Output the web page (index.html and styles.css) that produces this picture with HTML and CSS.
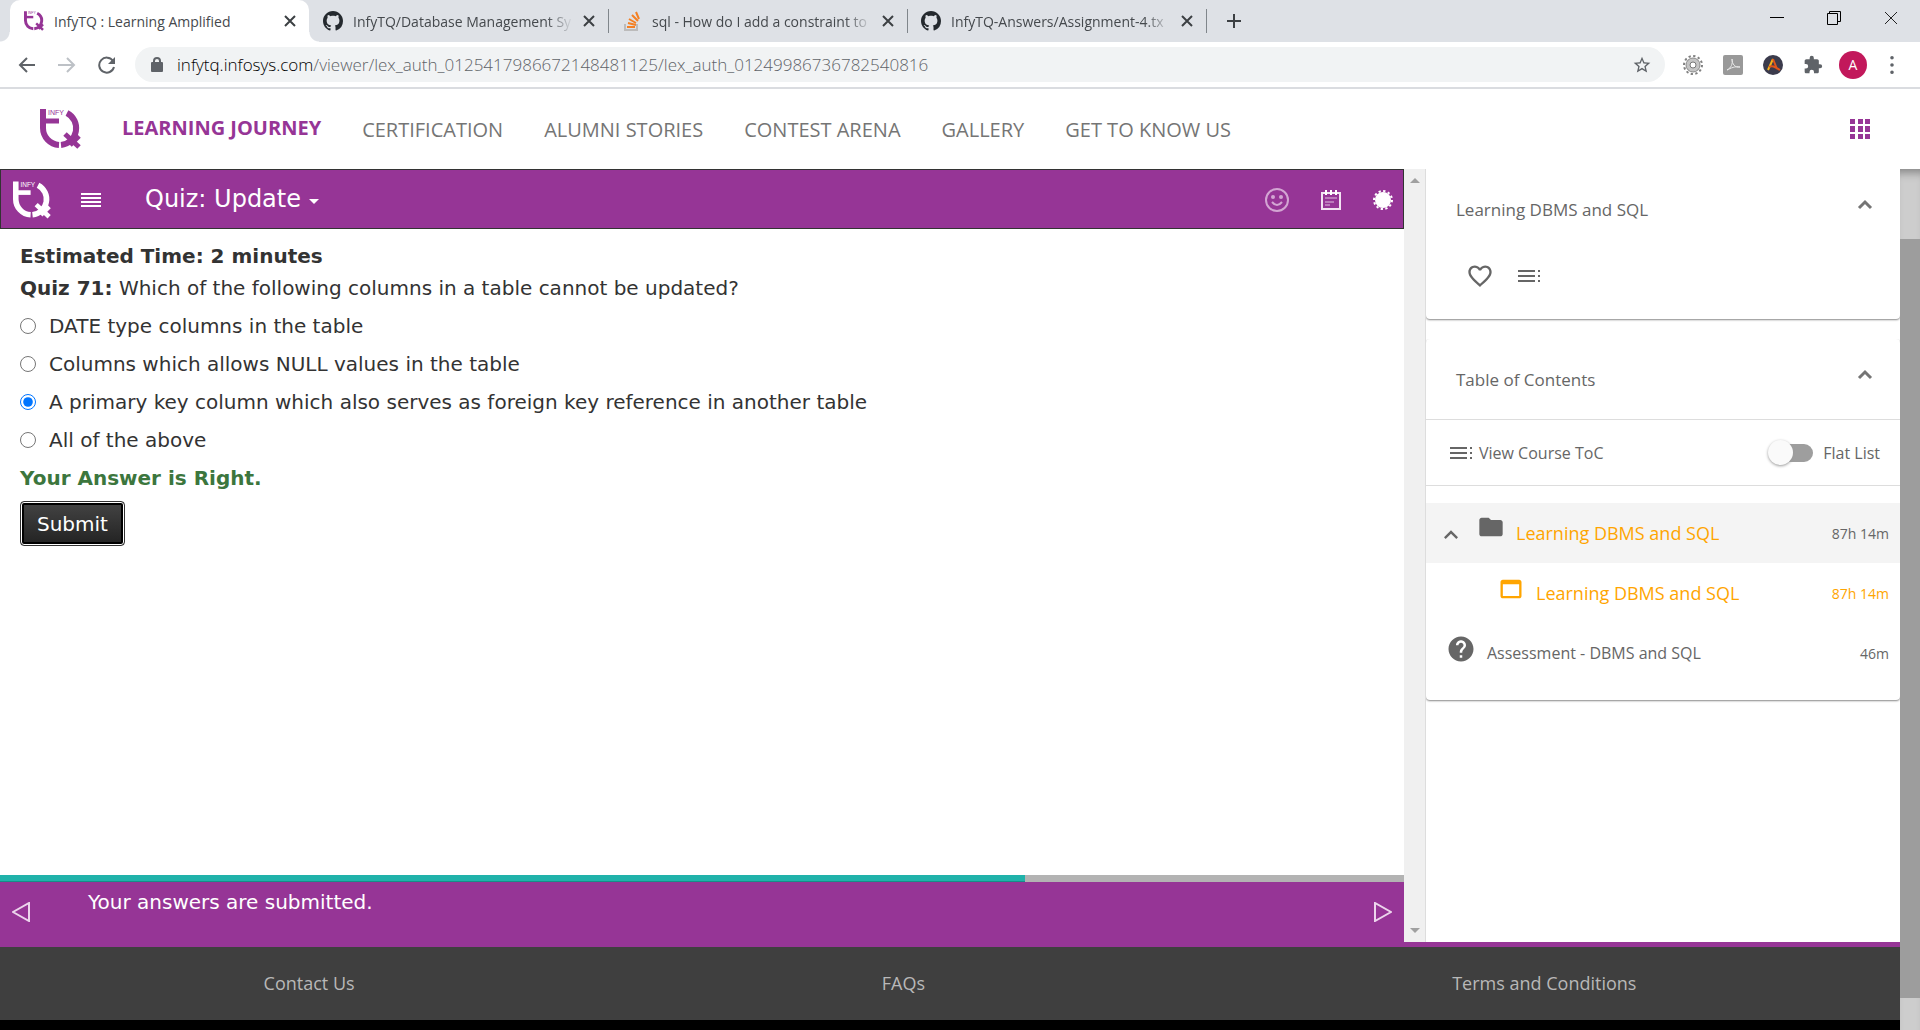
FILE: index.html
```html
<!DOCTYPE html>
<html lang="en">
<head>
<meta charset="utf-8">
<title>InfyTQ : Learning Amplified</title>
<link rel="stylesheet" href="styles.css">
</head>
<body>
<svg class="defs" aria-hidden="true">
  <symbol id="logo" viewBox="0 0 41 40">
    <g fill="none" stroke="currentColor">
      <path stroke-width="6" d="M3 0V19A17 17 0 0 0 19 36"/><path stroke-width="5" d="M0 12H19"/>
      <path stroke-width="6" d="M27 4A17 17 0 0 1 21 36"/><path d="M25 25L39 38" stroke-width="5"/><path d="M39 27L30 36" stroke-width="5"/>
    </g>
    <text x="8" y="6" font-family="Liberation Sans" font-size="7" fill="currentColor">INFY</text>
  </symbol>
  <symbol id="github" viewBox="0 0 16 16"><path fill="#24292e" d="M8 0C3.58 0 0 3.58 0 8c0 3.54 2.29 6.53 5.47 7.59.4.07.55-.17.55-.38v-1.49c-2.01.37-2.53-.49-2.69-.94-.09-.23-.48-.94-.82-1.13-.28-.15-.68-.52-.01-.53.63-.01 1.08.58 1.23.82.72 1.21 1.87.87 2.33.66.07-.52.28-.87.51-1.07-1.78-.2-3.64-.89-3.64-3.95 0-.87.31-1.59.82-2.15-.08-.2-.36-1.02.08-2.12 0 0 .67-.21 2.2.82.64-.18 1.32-.27 2-.27s1.36.09 2 .27c1.53-1.04 2.2-.82 2.2-.82.44 1.1.16 1.92.08 2.12.51.56.82 1.27.82 2.15 0 3.07-1.87 3.75-3.65 3.95.29.25.54.73.54 1.48v2.2c0 .21.15.46.55.38A8.01 8.01 0 0 0 16 8c0-4.42-3.58-8-8-8z"/></symbol>
  <symbol id="close" viewBox="0 0 12 12"><path d="M1 1L11 11M11 1L1 11" stroke="#3c4043" stroke-width="2"/></symbol>
  <symbol id="up" viewBox="0 0 24 24"><path d="M12 8l-6 6 1.41 1.41L12 10.83l4.59 4.58L18 14z" fill="currentColor"/></symbol>
  <symbol id="up-bold" viewBox="0 0 24 24"><path d="M6 15l6-6 6 6" fill="none" stroke="#757575" stroke-width="3"/></symbol>
  <symbol id="toc" viewBox="0 0 30 30"><path d="M4 9h17v2H4zM4 14h17v2H4zM4 19h17v2H4zM24 9h2v2h-2zM24 14h2v2h-2zM24 19h2v2h-2z" fill="currentColor"/></symbol>
</svg>
<header class="browser">
  <div class="tabs">
    <div class="tab active"><svg class="fav purple"><use href="#logo"/></svg><span class="title">InfyTQ : Learning Amplified</span><button aria-label="Close tab"><svg class="x"><use href="#close"/></svg></button></div>
    <div class="tab"><svg class="fav"><use href="#github"/></svg><span class="title">InfyTQ/Database Management Sy</span><button aria-label="Close tab"><svg class="x"><use href="#close"/></svg></button></div>
    <div class="tab"><svg class="fav" viewBox="0 0 20 20"><path d="M3 13v6h12v-6" fill="none" stroke="#bcbbbb" stroke-width="2"/><path d="M5 16h8M6 12l8 2M7 8l7 4M10 4l6 6M14 1l3 7" stroke="#f48024" stroke-width="2"/></svg><span class="title">sql - How do I add a constraint to</span><button aria-label="Close tab"><svg class="x"><use href="#close"/></svg></button></div>
    <div class="tab"><svg class="fav"><use href="#github"/></svg><span class="title">InfyTQ-Answers/Assignment-4.tx</span><button aria-label="Close tab"><svg class="x"><use href="#close"/></svg></button></div>
    <button class="newtab" aria-label="New tab"><svg width="16" height="16"><path d="M8 1v14M1 8h14" stroke="#3c4043" stroke-width="2"/></svg></button>
    <div class="window">
      <button aria-label="Minimize"><svg width="14" height="14"><path d="M0 6.500H14" stroke="#000"/></svg></button>
      <button aria-label="Restore"><svg width="14" height="14"><path d="M.5 2.500h10v11h-10zM2.500 2.500v-2h11v10h-3" fill="none" stroke="#000"/></svg></button>
      <button aria-label="Close"><svg width="14" height="14"><path d="M1 1L13 13M13 1L1 13" stroke="#222"/></svg></button>
    </div>
  </div>
  <div class="toolbar">
    <button aria-label="Back"><svg width="18" height="18"><path d="M17 9H2M9 2L2 9l7 7" fill="none" stroke="#5f6368" stroke-width="2"/></svg></button>
    <button aria-label="Forward"><svg width="18" height="18"><path d="M0 9h16M9 2l7 7-7 7" fill="none" stroke="#bdc1c6" stroke-width="2"/></svg></button>
    <button aria-label="Reload"><svg width="18" height="18"><path d="M15 5A7.500 7.500 0 1 0 16 11" fill="none" stroke="#5f6368" stroke-width="2"/><path d="M17 1v7h-7z" fill="#5f6368"/></svg></button>
    <div class="address">
      <svg width="12" height="16"><rect y="5" width="12" height="10" rx="1" fill="#5f6368"/><path d="M3 6V4a3 3 0 0 1 6 0v2" fill="none" stroke="#5f6368" stroke-width="2"/></svg>
      <span class="url"><b>infytq.infosys.com</b>/viewer/lex_auth_0125417986672148481125/lex_auth_01249986736782540816</span>
      <button aria-label="Bookmark"><svg width="20" height="20" viewBox="0 0 24 24"><path fill="#5f6368" d="M22 9.240l-7.190-.62L12 2 9.190 8.630 2 9.240l5.460 4.730L5.820 21 12 17.270 18.180 21l-1.630-7.030L22 9.240zM12 15.400l-3.760 2.270 1-4.280-3.320-2.880 4.380-.38L12 6.100l1.710 4.040 4.380.38-3.320 2.880 1 4.280L12 15.400z"/></svg></button>
    </div>
    <div class="exts">
      <svg viewBox="0 0 20 20"><circle cx="10" cy="10" r="9" fill="none" stroke="#808080" stroke-width="2" stroke-dasharray="2.300 2.400"/><circle cx="10" cy="10" r="7" fill="#c4c4c4" stroke="#8a8a8a"/><circle cx="10" cy="10" r="3" fill="#fff" stroke="#777"/></svg>
      <svg viewBox="0 0 20 20"><rect width="20" height="20" rx="2" fill="#999"/><path d="M4 15C8 13 10 9 9 4C9 9 12 13 17 12C12 11 8 13 4 15z" fill="none" stroke="#e8e8e8"/></svg>
      <svg viewBox="0 0 20 20"><circle cx="10" cy="10" r="10" fill="#3b3b4c"/><path d="M5 15L10 4" fill="none" stroke="#f5b31b" stroke-width="2"/><path d="M10 4L14 14M6 12C9 10 12 12 17 15" fill="none" stroke="#e0561b" stroke-width="2"/></svg>
      <svg viewBox="0 0 24 24"><path fill="#5f6368" d="M20.500 11H19V7c0-1.100-.9-2-2-2h-4V3.500a2.500 2.500 0 0 0-5 0V5H4c-1.100 0-2 .9-2 2v3.800h1.500a2.700 2.700 0 0 1 0 5.400H2V20c0 1.100.9 2 2 2h3.800v-1.500a2.700 2.700 0 0 1 5.400 0V22H17c1.100 0 2-.9 2-2v-4h1.500a2.500 2.500 0 0 0 0-5z"/></svg>
      <span class="avatar">A</span>
      <svg class="dots" viewBox="0 0 4 20"><path d="M2 2v.01M2 10v.01M2 18v.01" stroke="#5f6368" stroke-width="4" stroke-linecap="round"/></svg>
    </div>
  </div>
</header>
<nav class="site">
  <svg class="logo purple"><use href="#logo"/></svg>
  <a class="current" href="#">LEARNING JOURNEY</a><a href="#">CERTIFICATION</a><a href="#">ALUMNI STORIES</a><a href="#">CONTEST ARENA</a><a href="#">GALLERY</a><a href="#">GET TO KNOW US</a>
  <button class="apps" aria-label="Apps"><svg width="20" height="20"><path d="M0 0h5v5H0zM8 0h5v5H8zM15 0h5v5h-5zM0 7h5v6H0zM8 7h5v6H8zM15 7h5v6h-5zM0 15h5v5H0zM8 15h5v5H8zM15 15h5v5h-5z" fill="#963596"/></svg></button>
</nav>
<div class="view">
  <div class="page">
    <div class="content">
      <main class="quiz">
        <div class="bar">
          <svg class="logo small"><use href="#logo"/></svg>
          <button aria-label="Menu"><svg width="20" height="14"><path d="M0 1h20M0 5h20M0 9h20M0 13h20" stroke="#fff" stroke-width="2"/></svg></button>
          <h1>Quiz: Update</h1><span class="caret"></span>
          <div class="tools">
            <button aria-label="Feedback"><svg width="24" height="24" viewBox="0 0 24 24"><g fill="none" stroke="#d3a5d3" stroke-width="2"><circle cx="12" cy="12" r="11"/><path d="M7 14q5 6 10 0"/></g><circle cx="8" cy="9" r="2" fill="#d3a5d3"/><circle cx="16" cy="9" r="2" fill="#d3a5d3"/></svg></button>
            <button aria-label="Notes"><svg width="20" height="20"><path d="M1 3h18v16H1z" fill="none" stroke="#f2e3f2" stroke-width="2"/><path d="M4 8h12M4 12h9M4 15h5" fill="none" stroke="#e0c2e0"/><path d="M5 0v5M10 0v5M15 0v5" stroke="#fff" stroke-width="2"/></svg></button>
            <button aria-label="Settings"><svg width="20" height="20"><circle cx="10" cy="10" r="8" fill="#fff"/><circle cx="10" cy="10" r="9" fill="none" stroke="#fff" stroke-width="2" stroke-dasharray="2.300 2.400"/></svg></button>
          </div>
        </div>
        <form class="question">
          <p><b>Estimated Time: 2 minutes</b></p>
          <p><b>Quiz 71:</b> Which of the following columns in a table cannot be updated?</p>
          <label><input type="radio" name="q">DATE type columns in the table</label>
          <label><input type="radio" name="q">Columns which allows NULL values in the table</label>
          <label><input type="radio" name="q" checked>A primary key column which also serves as foreign key reference in another table</label>
          <label><input type="radio" name="q">All of the above</label>
          <p class="right"><b>Your Answer is Right.</b></p>
          <button type="button">Submit</button>
        </form>
        <div class="progress"><div style="width:73%"></div></div>
        <div class="status">
          <button aria-label="Previous"><svg width="18" height="20"><path d="M17 1v18L1 10z" fill="none" stroke="#ecd5ec" stroke-width="2"/></svg></button>
          <p>Your answers are submitted.</p>
          <button aria-label="Next"><svg width="18" height="20"><path d="M1 1v18l16-9z" fill="none" stroke="#ecd5ec" stroke-width="2"/></svg></button>
        </div>
      </main>
      <div class="track"><i class="arrow-up"></i><i class="arrow-down"></i></div>
      <aside>
        <section class="card first">
          <h2>Learning DBMS and SQL<svg class="i24"><use href="#up-bold"/></svg></h2>
          <div class="actions"><button aria-label="Like"><svg width="28" height="28" viewBox="0 0 24 24"><path fill="currentColor" d="M16.500 3c-1.740 0-3.410.81-4.500 2.090C10.910 3.810 9.240 3 7.500 3 4.420 3 2 5.420 2 8.500c0 3.780 3.400 6.860 8.550 11.540L12 21.350l1.450-1.320C18.600 15.360 22 12.280 22 8.500 22 5.420 19.580 3 16.500 3zm-4.400 15.550l-.1.100-.1-.1C7.140 14.240 4 11.390 4 8.500 4 6.500 5.500 5 7.500 5c1.540 0 3.040.99 3.570 2.360h1.870C13.460 5.990 14.960 5 16.500 5c2 0 3.500 1.500 3.500 3.500 0 2.890-3.140 5.740-7.900 10.050z"/></svg></button><button aria-label="Contents"><svg width="30" height="30"><use href="#toc"/></svg></button></div>
        </section>
        <section class="card">
          <h2>Table of Contents<svg class="i24"><use href="#up-bold"/></svg></h2>
          <div class="options"><a href="#"><svg width="30" height="30"><use href="#toc"/></svg>View Course ToC</a><label><input type="checkbox" class="switch">Flat List</label></div>
          <ul>
            <li class="folder"><svg class="chev"><use href="#up"/></svg><svg width="28" height="28" viewBox="0 0 24 24" class="raised"><path fill="currentColor" d="M10 4H4c-1.100 0-2 .9-2 2v12c0 1.100.9 2 2 2h16c1.100 0 2-.9 2-2V8c0-1.100-.9-2-2-2h-8l-2-2z"/></svg><a href="#">Learning DBMS and SQL</a><span>87h 14m</span></li>
            <li class="child"><svg width="28" height="28" viewBox="0 0 24 24" class="raised"><path fill="currentColor" d="M19 4H5c-1.100 0-2 .9-2 2v12c0 1.100.9 2 2 2h14c1.100 0 2-.9 2-2V6c0-1.100-.9-2-2-2zm0 14H5V8h14v10z"/></svg><a href="#">Learning DBMS and SQL</a><span>87h 14m</span></li>
            <li class="quizrow"><svg width="30" height="30" viewBox="0 0 24 24" class="raised"><path fill="currentColor" d="M12 2C6.480 2 2 6.480 2 12s4.480 10 10 10 10-4.480 10-10S17.520 2 12 2zm1 17h-2v-2h2v2zm2.070-7.750l-.9.920C13.450 12.900 13 13.500 13 15h-2v-.5c0-1.100.45-2.100 1.170-2.830l1.240-1.260c.37-.36.59-.86.59-1.410 0-1.100-.9-2-2-2s-2 .9-2 2H8c0-2.210 1.790-4 4-4s4 1.790 4 4c0 .88-.36 1.680-.93 2.250z"/></svg><a href="#">Assessment - DBMS and SQL</a><span>46m</span></li>
          </ul>
        </section>
      </aside>
    </div>
    <footer><a href="#">Contact Us</a><a href="#">FAQs</a><a href="#">Terms and Conditions</a></footer>
  </div>
  <div class="scroll"><div class="thumb"></div></div>
</div>
</body>
</html>
```
FILE: styles.css
```css
* { box-sizing: border-box; }
body { margin: 0; min-height: 100vh; display: flex; flex-direction: column; font-family: "Open Sans", sans-serif; color: #666; background: #fff; }
button { border: 0; background: none; padding: 0; font: inherit; color: inherit; display: flex; align-items: center; justify-content: center; }
a { color: inherit; text-decoration: none; }
h1, h2, p, ul { margin: 0; padding: 0; font-weight: 400; }
svg { display: block; flex: none; }
.defs { display: none; }
.purple { color: #963596; }

.browser { border-bottom: 2px solid #dadce0; background: #fff; }
.tabs { display: flex; height: 42px; background: #dee1e6; padding-left: 10px; align-items: stretch; }
.tab { display: flex; align-items: center; width: 299px; padding: 0 13px 0 14px; gap: 10px; position: relative; color: #45494d; }
.tab.active { background: #fff; border-radius: 10px 10px 0 0; }
.active::before, .active::after { content: ""; position: absolute; bottom: 0; width: 10px; height: 10px; }
.active::before { left: -10px; background: radial-gradient(circle at 0 0, transparent 9px, #fff 10px); }
.active::after { right: -10px; background: radial-gradient(circle at 100% 0, transparent 9px, #fff 10px); }
.tab + .tab + .tab::before, .newtab::before { content: ""; width: 1px; height: 24px; background: #80868b; position: absolute; left: 0; top: 9px; }
.fav { width: 20px; height: 20px; }
.title { flex: 1; font-size: 14px; white-space: nowrap; overflow: hidden; mask-image: linear-gradient(90deg, #000 88%, transparent); }
.active .title { mask-image: none; }
.x { width: 12px; height: 12px; }
.newtab { width: 56px; position: relative; }
.window { margin-left: auto; display: flex; gap: 43px; padding: 0 22px 6px 0; }

.toolbar { display: flex; align-items: center; height: 45px; padding: 0 26px 0 18px; gap: 22px; }
.address { flex: 1; display: flex; align-items: center; height: 35px; border-radius: 18px; background: #f1f3f4; padding: 0 13px 0 16px; gap: 14px; margin-left: -3px; }
.url { flex: 1; font-size: 17px; font-weight: 300; color: #5f6368; white-space: nowrap; }
.url b { font-weight: 300; color: #000; }
.exts { display: flex; align-items: center; gap: 20px; margin-left: -4px; }
.exts svg { width: 20px; height: 20px; }
.exts .dots { width: 4px; height: 18px; }
.avatar { width: 28px; height: 28px; border-radius: 50%; background: #c2185b; color: #fff; font-size: 14px; line-height: 28px; text-align: center; margin: 0 3px 0 -4px; }

.site { display: flex; align-items: center; height: 80px; padding: 0 50px 0 40px; gap: 41px; font-size: 20px; color: #757575; }
.logo { width: 41px; height: 40px; }
.site a { white-space: nowrap; }
.site .current { font-weight: 700; color: #963596; padding-bottom: 4px; }
.apps { margin-left: auto; }

.view { flex: 1; display: flex; }
.page { flex: 1; display: flex; flex-direction: column; background: #000; padding-bottom: 10px; }
.content { flex: 1; display: flex; background: #fff; border-bottom: 5px solid #963596; }
.quiz { flex: 1; display: flex; flex-direction: column; font-family: "DejaVu Sans", sans-serif; font-size: 20px; color: #333; margin-bottom: -5px; }
.bar { display: flex; align-items: center; height: 60px; background: #963596; color: #fff; border: 1px solid #333; padding: 2px 10px 0 12px; }
.small { width: 38px; height: 38px; margin-right: 30px; }
.bar h1 { font-size: 24px; margin-left: 44px; padding-bottom: 2px; }
.caret { border: 5px solid transparent; border-top-color: #fff; border-bottom: 0; margin: 2px 0 0 8px; }
.tools { margin-left: auto; display: flex; gap: 32px; }
.question { flex: 1; padding: 11px 20px; line-height: 32px; }
.question p + label { margin-top: 3px; }
.question label { display: flex; align-items: center; gap: 13px; height: 38px; }
.question input { width: 16px; height: 16px; margin: 0; }
.question .right { color: #3c763d; line-height: 38px; }
.question button { height: 45px; padding: 0 16px; margin-top: 4px; border: 1px solid #333; border-radius: 4px; background: linear-gradient(#444, #222); box-shadow: inset 0 0 0 1px #fff, inset 0 0 0 3px #000; color: #fff; }
.progress { height: 7px; background: #b3b3b3; }
.progress div { height: 7px; background: #20b2aa; border-bottom: 1px solid #168e88; }
.status { height: 65px; background: #963596; color: #fff; display: flex; padding: 0 12px 6px; align-items: center; }
.status p { flex: 1; padding-left: 58px; align-self: flex-start; line-height: 40px; }
.track { width: 21px; background: #f0f0f0; display: flex; flex-direction: column; justify-content: space-between; align-items: center; padding: 9px 0; }
.arrow-up { border: 5px solid transparent; border-bottom-color: #a0a0a0; border-top: 0; }
.arrow-down { border: 5px solid transparent; border-top-color: #a0a0a0; border-bottom: 0; }
aside { width: 475px; border-left: 1px solid #ddd; }
.card { border-radius: 4px; box-shadow: 0 1px 2px #888; clip-path: inset(0 0 -6px 0); }
.first { height: 150px; margin-bottom: 20px; border-radius: 0 0 4px 4px; }
.card h2 { display: flex; justify-content: space-between; height: 80px; align-items: center; padding: 0 23px 0 30px; font-size: 17px; }
.i24 { width: 24px; height: 24px; margin-bottom: 8px; }
.actions { display: flex; gap: 20px; padding: 12px 40px; }
.options { display: flex; justify-content: space-between; align-items: center; height: 67px; border: 1px solid #ddd; border-width: 1px 0; padding: 0 20px; font-size: 16px; }
.options a, .options label { display: flex; align-items: center; }
.options a { gap: 3px; }
.options label { gap: 10px; }
.switch { appearance: none; width: 38px; height: 18px; border-radius: 9px; background: #9e9e9e; margin: 0; display: flex; align-items: center; }
.switch::before { content: ""; flex: none; width: 25px; height: 25px; border-radius: 50%; background: #fafafa; box-shadow: 0 1px 3px #999; margin-left: -7px; }
ul { list-style: none; padding: 17px 0; }
li { display: flex; align-items: center; height: 60px; padding: 0 11px 0 20px; font-size: 16px; }
li a { flex: 1; padding-left: 11px; }
li span { font-size: 14px; }
.raised { margin-bottom: 8px; }
.chev { width: 28px; height: 28px; margin-top: 4px; }
.folder { background: #f4f4f4; padding-left: 11px; }
.folder .raised { margin: 0 0 12px 12px; }
.folder a, .child { color: #ffa500; font-size: 18px; }
.child { padding-left: 71px; }
footer { height: 73px; background: #3f3f3f; color: #b8b8b8; display: flex; justify-content: space-around; align-items: center; font-size: 18px; padding-bottom: 2px; }
.scroll { width: 20px; background: #cdcdcd; padding: 70px 0 32px; display: flex; box-shadow: inset 0 10px 8px -6px #888; }
.thumb { flex: 1; background: #9d9d9d; }
```
